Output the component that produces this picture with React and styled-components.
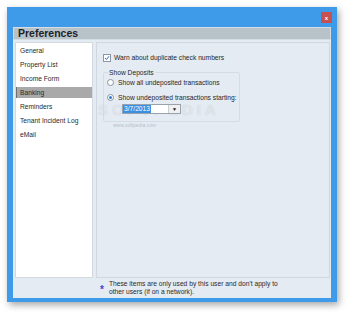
import styled, { createGlobalStyle } from "styled-components";

const Global = createGlobalStyle`
    body {
        margin : 0;
        background : #ffffff;
        font-family : "Liberation Sans", Arial, sans-serif;
    }
`;
const Page = styled.div`
    width : 350px;
    height : 317px;
    padding : 7px 0 0 7px;
    box-sizing : border-box;
`;
const Window = styled.div`
    width : 330px;
    height : 295px;
    background : #3d9be9;
    padding : 0 6px 4px 6px;
    box-sizing : border-box;
    display : flex;
    flex-direction : column;
    box-shadow : 2px 3px 7px rgba(0, 0, 0, 0.35);
`;
const TitleBar = styled.div`
    height : 20px;
    display : flex;
    justify-content : flex-end;
    align-items : flex-start;
    padding-top : 5px;
    box-sizing : border-box;
    margin-right : -1px;
`;
const CloseButton = styled.div`
    width : 11px;
    height : 11px;
    background : #c75050;
    color : #ffffff;
    font-size : 6px;
    font-weight : bold;
    display : flex;
    align-items : center;
    justify-content : center;
`;
const Inner = styled.div`
    flex : 1;
    background : #e4ebf3;
    display : flex;
    flex-direction : column;
`;
const Header = styled.div`
    height : 13px;
    background : #b8c3c9;
    border : 1px solid #d6dde2;
    box-sizing : border-box;
    padding-left : 4px;
    font-size : 10.5px;
    font-weight : bold;
    color : #1e2226;
    line-height : 11px;
`;
const Body = styled.div`
    height : 238px;
    display : flex;
    gap : 3px;
    padding : 2px 1px 0 2px;
    box-sizing : border-box;
`;
const ListPanel = styled.div`
    width : 78px;
    background : #ffffff;
    border : 1px solid #d3d9df;
    box-sizing : border-box;
    padding-top : 2px;
    display : flex;
    flex-direction : column;
    gap : 3px;
`;
const ListItem = styled.div`
    height : 11px;
    line-height : 11px;
    font-size : 6.7px;
    padding-left : 3px;
    color : #2a2a2a;
    background : ${p => p.$active ? "#a9a9a9" : "transparent"};
    border-left : 1px solid ${p => p.$active ? "#6f6f6f" : "transparent"};
`;
const ContentPanel = styled.div`
    flex : 1;
    position : relative;
    border : 1px solid #cfd7e0;
    box-sizing : border-box;
    padding : 10px 0 0 6px;
    font-size : 6.7px;
    color : #1f1f1f;
`;
const CheckRow = styled.div`
    display : flex;
    align-items : center;
    gap : 3px;
    height : 9px;
`;
const CheckBox = styled.div`
    width : 8px;
    height : 8px;
    border : 1px solid #8d97a3;
    background : #ffffff;
    box-sizing : border-box;
    display : flex;
    align-items : center;
    justify-content : center;
`;
const GroupBox = styled.fieldset`
    width : 137px;
    height : 53px;
    margin : 7px 0 0 0;
    padding : 0 0 0 3px;
    border : 1px solid #d4dce5;
    border-radius : 2px;
    box-sizing : border-box;
`;
const Legend = styled.legend`
    padding : 0 1px;
    margin-left : 1px;
    font-size : 6.7px;
    color : #1f1f1f;
`;
const RadioRow = styled.div`
    display : flex;
    align-items : center;
    gap : 4px;
    height : 9px;
    margin-top : ${p => p.$first ? "2px" : "6px"};
`;
const Radio = styled.div`
    width : 7px;
    height : 7px;
    border-radius : 50%;
    border : 1px solid #8b939c;
    background : #ffffff;
    box-sizing : border-box;
    display : flex;
    align-items : center;
    justify-content : center;
    &::after {
        content : "";
        width : 3px;
        height : 3px;
        border-radius : 50%;
        background : ${p => p.$checked ? "#2f7fd6" : "transparent"};
    }
`;
const DateField = styled.div`
    position : relative;
    z-index : 2;
    width : 59px;
    height : 10px;
    margin : 2px 0 0 15px;
    background : #ffffff;
    border : 1px solid #9aa3ad;
    box-sizing : border-box;
    display : flex;
    align-items : center;
    justify-content : space-between;
`;
const DateText = styled.span`
    background : #3c8ee0;
    color : #ffffff;
    font-size : 6.7px;
    line-height : 8px;
    padding : 0 1px;
`;
const DropButton = styled.div`
    width : 11px;
    height : 8px;
    border-left : 1px solid #c8ced6;
    background : #f0f0f0;
    display : flex;
    align-items : center;
    justify-content : center;
    font-size : 5px;
    color : #111;
`;
const Watermark = styled.div`
    position : absolute;
    z-index : 1;
    left : 1px;
    top : 58px;
    font-size : 15px;
    font-weight : bold;
    letter-spacing : 4px;
    color : rgba(255, 255, 255, 0.45);
    text-shadow : 0 0 1px rgba(120, 130, 140, 0.3);
    pointer-events : none;
`;
const WatermarkUrl = styled.div`
    position : absolute;
    left : 16px;
    top : 79px;
    font-size : 5px;
    color : rgba(150, 160, 170, 0.6);
`;
const Footer = styled.div`
    flex : 1;
    display : flex;
    align-items : center;
    gap : 5px;
    padding-left : 87px;
    font-size : 6.7px;
    color : #2a2a2a;
    line-height : 8px;
`;
const Star = styled.span`
    color : #4a3fd0;
    font-size : 10px;
    font-weight : bold;
    margin-top : 3px;
`;

const items = ["General", "Property List", "Income Form", "Banking", "Reminders", "Tenant Incident Log", "eMail"];

function App() {
    return (<>
        <Global />
        <Page>
            <Window>
                <TitleBar>
                    <CloseButton>x</CloseButton>
                </TitleBar>
                <Inner>
                    <Header>Preferences</Header>
                    <Body>
                        <ListPanel>
                            {items.map(it =>
                                <ListItem key={it} $active={it === "Banking"}>{it}</ListItem>
                            )}
                        </ListPanel>
                        <ContentPanel>
                            <CheckRow>
                                <CheckBox>
                                    <svg width="6" height="6" viewBox="0 0 6 6">
                                        <path d="M1 3 L2.5 4.5 L5 1.2" stroke="#2f6fc4" strokeWidth="1" fill="none" />
                                    </svg>
                                </CheckBox>
                                <span>Warn about duplicate check numbers</span>
                            </CheckRow>
                            <GroupBox>
                                <Legend>Show Deposits</Legend>
                                <RadioRow $first>
                                    <Radio />
                                    <span>Show all undeposited transactions</span>
                                </RadioRow>
                                <RadioRow>
                                    <Radio $checked />
                                    <span>Show undeposited transactions starting:</span>
                                </RadioRow>
                                <DateField>
                                    <DateText>3/7/2013</DateText>
                                    <DropButton>▼</DropButton>
                                </DateField>
                            </GroupBox>
                            <Watermark>SOFTPEDIA</Watermark>
                            <WatermarkUrl>www.softpedia.com</WatermarkUrl>
                        </ContentPanel>
                    </Body>
                    <Footer>
                        <Star>*</Star>
                        <span>These items are only used by this user and don't apply to<br />other users (if on a network).</span>
                    </Footer>
                </Inner>
            </Window>
        </Page>
    </>)
}
export default App;
